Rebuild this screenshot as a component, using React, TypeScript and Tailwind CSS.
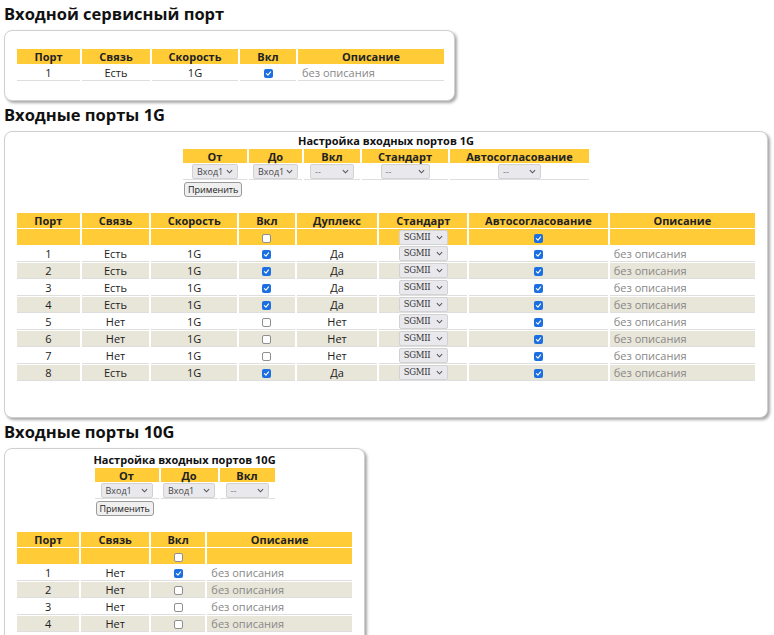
import React from "react";

type Row1G = { port: number; link: string; on: boolean };

const rows1G: Row1G[] = [
  { port: 1, link: "Есть", on: true },
  { port: 2, link: "Есть", on: true },
  { port: 3, link: "Есть", on: true },
  { port: 4, link: "Есть", on: true },
  { port: 5, link: "Нет", on: false },
  { port: 6, link: "Нет", on: false },
  { port: 7, link: "Нет", on: false },
  { port: 8, link: "Есть", on: true },
];

const rows10G = [1, 2, 3, 4, 5, 6, 7, 8].map((p) => ({ port: p, link: "Нет", on: p === 1 }));

function Check({ on }: { on: boolean }) {
  if (on) {
    return (
      <span className="inline-flex h-[9px] w-[9px] items-center justify-center rounded-[2px] bg-[#1b6fe0] align-middle">
        <svg viewBox="0 0 10 10" className="h-[7px] w-[7px]">
          <path d="M2 5.2 L4.2 7.2 L8 2.8" fill="none" stroke="white" strokeWidth="1.6" strokeLinecap="round" strokeLinejoin="round" />
        </svg>
      </span>
    );
  }
  return <span className="inline-block h-[9px] w-[9px] rounded-[2px] border border-[#8f8f8f] bg-white align-middle" />;
}

function Select({ label, className, serif }: { label: string; className: string; serif?: boolean }) {
  return (
    <span
      className={`inline-flex h-[15px] items-center justify-between rounded-[2px] border border-[#d2d2d2] bg-[#e9e9ed] pl-[4px] pr-[4px] align-middle ${className}`}
    >
      <span
        className={
          serif
            ? "font-['DejaVu_Serif',serif] text-[8.5px] leading-none tracking-[-0.3px] text-[#333]"
            : label === "--"
              ? "text-[9px] leading-none text-[#777]"
              : "text-[9px] leading-none text-[#444]"
        }
      >
        {label}
      </span>
      <svg viewBox="0 0 8 5" className="h-[5px] w-[7px]">
        <path d="M1 1 L4 4 L7 1" fill="none" stroke="#555" strokeWidth="1.2" />
      </svg>
    </span>
  );
}

function Button() {
  return (
    <div className="mt-[1px] flex h-[15px] pl-[3px] leading-none">
      <span className="inline-flex h-[15px] items-center rounded-[3px] border border-[#9a9a9a] bg-[#efefef] px-[3px] text-[9px] leading-none text-[#222]">
        Применить
      </span>
    </div>
  );
}

function Box({ className, children }: { className: string; children: React.ReactNode }) {
  return (
    <div className={`rounded-[8px] border border-[#cfcfcf] bg-white shadow-[2px_2px_3px_rgba(0,0,0,0.35)] ${className}`}>
      {children}
    </div>
  );
}

function Heading({ children }: { children: React.ReactNode }) {
  return <h2 className="mb-[4px] mt-[2px] h-[24px] text-[16.5px] font-bold leading-[24px] text-[#111]">{children}</h2>;
}

const th = "h-[15px] bg-[#ffcb37] p-0 text-center text-[11px] font-bold leading-none text-[#222]";
const thS = "h-[14px] bg-[#ffcb37] p-0 text-center text-[11px] font-bold leading-none text-[#222]";
const yel = "h-[16px] bg-[#ffcb37] p-0 text-center align-middle text-[11px] leading-none";
const tdC = "h-[16px] border-b border-[#dedede] p-0 text-center align-middle text-[11px] leading-none text-[#222]";
const tdD = "h-[16px] border-b border-[#dedede] p-0 pl-[4px] text-left align-middle text-[11px] leading-none text-[#888]";
const tdS = "h-[16px] border-b border-[#dedede] p-0 text-center align-middle text-[11px] leading-none";

export default function App() {
  return (
    <div className="min-h-screen bg-white pl-[4px] font-['Open_Sans','Noto_Sans',sans-serif] text-[#222]">
      {/* service port */}
      <Heading>Входной сервисный порт</Heading>
      <Box className="w-[451px] pb-[18px] pl-[10px] pt-[17px]">
        <table className="border-separate border-spacing-x-[2px] border-spacing-y-[1px]">
          <thead>
            <tr>
              <th className={`${th} w-[63px]`}>Порт</th>
              <th className={`${th} w-[68px]`}>Связь</th>
              <th className={`${th} w-[86px]`}>Скорость</th>
              <th className={`${th} w-[56px]`}>Вкл</th>
              <th className={`${th} w-[146px]`}>Описание</th>
            </tr>
          </thead>
          <tbody>
            <tr>
              <td className={tdC}>1</td>
              <td className={tdC}>Есть</td>
              <td className={tdC}>1G</td>
              <td className={tdC}>
                <Check on />
              </td>
              <td className={tdD}>без описания</td>
            </tr>
          </tbody>
        </table>
      </Box>

      {/* 1G ports */}
      <Heading>Входные порты 1G</Heading>
      <Box className="w-[764px] pb-[35px] pl-[10px] pr-[10px] pt-[2px]">
        <div className="mx-auto w-fit">
          <div className="h-[14px] text-center text-[11px] font-bold leading-[14px] text-[#111]">
            Настройка входных портов 1G
          </div>
          <table className="border-separate border-spacing-x-[2px] border-spacing-y-[1px]">
            <thead>
              <tr>
                <th className={`${thS} w-[64px]`}>От</th>
                <th className={`${thS} w-[53px]`}>До</th>
                <th className={`${thS} w-[56px]`}>Вкл</th>
                <th className={`${thS} w-[86px]`}>Стандарт</th>
                <th className={`${thS} w-[139px]`}>Автосогласование</th>
              </tr>
            </thead>
            <tbody>
              <tr>
                <td className={tdS}>
                  <Select label="Вход1" className="w-[46px]" />
                </td>
                <td className={tdS}>
                  <Select label="Вход1" className="w-[45px]" />
                </td>
                <td className={tdS}>
                  <Select label="--" className="w-[44px]" />
                </td>
                <td className={tdS}>
                  <Select label="--" className="w-[49px]" />
                </td>
                <td className={tdS}>
                  <Select label="--" className="w-[43px]" />
                </td>
              </tr>
            </tbody>
          </table>
          <Button />
        </div>

        <table className="mt-[15px] border-separate border-spacing-x-[2px] border-spacing-y-[1px]">
          <thead>
            <tr>
              <th className={`${th} w-[63px]`}>Порт</th>
              <th className={`${th} w-[68px]`}>Связь</th>
              <th className={`${th} w-[86px]`}>Скорость</th>
              <th className={`${th} w-[56px]`}>Вкл</th>
              <th className={`${th} w-[81px]`}>Дуплекс</th>
              <th className={`${th} w-[88px]`}>Стандарт</th>
              <th className={`${th} w-[139px]`}>Автосогласование</th>
              <th className={`${th} w-[146px]`}>Описание</th>
            </tr>
          </thead>
          <tbody>
            <tr>
              <td className={yel} />
              <td className={yel} />
              <td className={yel} />
              <td className={yel}>
                <Check on={false} />
              </td>
              <td className={yel} />
              <td className={yel}>
                <Select label="SGMII" serif className="w-[49px]" />
              </td>
              <td className={yel}>
                <Check on />
              </td>
              <td className={yel} />
            </tr>
            {rows1G.map((r, i) => {
              const bg = i % 2 === 1 ? "bg-[#e8e5d9]" : "bg-white";
              return (
                <tr key={r.port}>
                  <td className={`${tdC} ${bg}`}>{r.port}</td>
                  <td className={`${tdC} ${bg}`}>{r.link}</td>
                  <td className={`${tdC} ${bg}`}>1G</td>
                  <td className={`${tdC} ${bg}`}>
                    <Check on={r.on} />
                  </td>
                  <td className={`${tdC} ${bg}`}>{r.on ? "Да" : "Нет"}</td>
                  <td className={`${tdC} ${bg}`}>
                    <Select label="SGMII" serif className="w-[49px]" />
                  </td>
                  <td className={`${tdC} ${bg}`}>
                    <Check on />
                  </td>
                  <td className={`${tdD} ${bg}`}>без описания</td>
                </tr>
              );
            })}
          </tbody>
        </table>
      </Box>

      {/* 10G ports */}
      <Heading>Входные порты 10G</Heading>
      <Box className="w-[361px] pb-[31px] pl-[10px] pr-[10px] pt-[4px]">
        <div className="mx-auto w-fit">
          <div className="h-[14px] text-center text-[11px] font-bold leading-[14px] text-[#111]">
            Настройка входных портов 10G
          </div>
          <table className="border-separate border-spacing-x-[2px] border-spacing-y-[1px]">
            <thead>
              <tr>
                <th className={`${thS} w-[64px]`}>От</th>
                <th className={`${thS} w-[57px]`}>До</th>
                <th className={`${thS} w-[55px]`}>Вкл</th>
              </tr>
            </thead>
            <tbody>
              <tr>
                <td className={tdS}>
                  <Select label="Вход1" className="w-[52px]" />
                </td>
                <td className={tdS}>
                  <Select label="Вход1" className="w-[52px]" />
                </td>
                <td className={tdS}>
                  <Select label="--" className="w-[43px]" />
                </td>
              </tr>
            </tbody>
          </table>
          <Button />
        </div>

        <table className="mt-[15px] border-separate border-spacing-x-[2px] border-spacing-y-[1px]">
          <thead>
            <tr>
              <th className={`${th} w-[63px]`}>Порт</th>
              <th className={`${th} w-[68px]`}>Связь</th>
              <th className={`${th} w-[55px]`}>Вкл</th>
              <th className={`${th} w-[146px]`}>Описание</th>
            </tr>
          </thead>
          <tbody>
            <tr>
              <td className={yel} />
              <td className={yel} />
              <td className={yel}>
                <Check on={false} />
              </td>
              <td className={yel} />
            </tr>
            {rows10G.map((r, i) => {
              const bg = i % 2 === 1 ? "bg-[#e8e5d9]" : "bg-white";
              return (
                <tr key={r.port}>
                  <td className={`${tdC} ${bg}`}>{r.port}</td>
                  <td className={`${tdC} ${bg}`}>{r.link}</td>
                  <td className={`${tdC} ${bg}`}>
                    <Check on={r.on} />
                  </td>
                  <td className={`${tdD} ${bg}`}>без описания</td>
                </tr>
              );
            })}
          </tbody>
        </table>
      </Box>
    </div>
  );
}
